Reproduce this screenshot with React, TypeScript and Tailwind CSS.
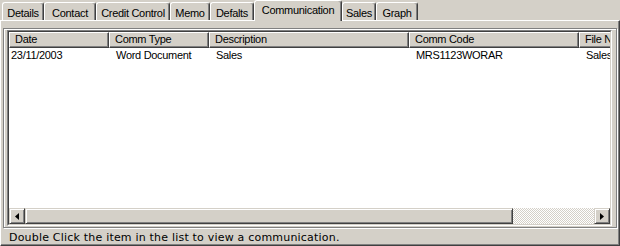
import React from 'react';

const tabs = [
  { label: 'Details', w: 'w-[42px]' },
  { label: 'Contact', w: 'w-[52px]' },
  { label: 'Credit Control', w: 'w-[74px]' },
  { label: 'Memo', w: 'w-[40px]' },
  { label: 'Defalts', w: 'w-[44px]' },
  { label: 'Communication', w: 'w-[88px]', active: true },
  { label: 'Sales', w: 'w-[34px]' },
  { label: 'Graph', w: 'w-[42px]' },
];

const columns = [
  { label: 'Date', w: 'w-[100px]' },
  { label: 'Comm Type', w: 'w-[100px]' },
  { label: 'Description', w: 'w-[200px]' },
  { label: 'Comm Code', w: 'w-[170px]' },
  { label: 'File Name', w: 'w-[140px]' },
];

const rows = [['23/11/2003', 'Word Document', 'Sales', 'MRS1123WORAR', 'Sales\\MRS1123WORAR.doc']];

const ArrowBtn: React.FC<{ dir: 'left' | 'right' }> = ({ dir }) => (
  <div className="w-[16px] h-[16px] shrink-0 bg-[#d4d0c8] border-t border-l border-b border-r border-t-[#d4d0c8] border-l-[#d4d0c8] border-b-[#404040] border-r-[#404040] shadow-[inset_1px_1px_0_#fff,inset_-1px_-1px_0_#808080] flex items-center justify-center">
    <svg width="4" height="7" viewBox="0 0 4 7">
      {dir === 'left' ? <path d="M0 3.5 L4 0 L4 7 Z" fill="#000" /> : <path d="M4 3.5 L0 0 L0 7 Z" fill="#000" />}
    </svg>
  </div>
);

export default function App() {
  return (
    <div className="w-[620px] h-[246px] bg-[#d4d0c8] overflow-hidden flex flex-col font-['Liberation_Sans',Arial,sans-serif] text-[11px] text-black">
      {/* Tab strip */}
      <div className="h-[20px] flex items-end pl-[2px] shrink-0">
        {tabs.map((t) =>
          t.active ? (
            <div
              key={t.label}
              className={`${t.w} h-[21px] -mb-[1px] relative z-10 bg-[#d4d0c8] border-t border-l border-r border-t-white border-l-white border-r-[#404040] rounded-t-[3px] shadow-[inset_-1px_0_0_#808080] flex justify-center pt-[2px] leading-[14px] tracking-[-0.3px]`}
            >
              {t.label}
            </div>
          ) : (
            <div
              key={t.label}
              className={`${t.w} h-[18px] border-t border-l border-r border-t-white border-l-white border-r-[#404040] rounded-t-[3px] shadow-[inset_-1px_0_0_#808080] flex justify-center pt-[3px] leading-[14px] tracking-[-0.3px]`}
            >
              {t.label}
            </div>
          )
        )}
      </div>

      {/* Tab panel */}
      <div className="flex-1 flex flex-col border-t border-l border-r border-b border-t-white border-l-white border-r-[#404040] border-b-[#404040] shadow-[inset_-1px_-1px_0_#808080] pt-[7px] pl-[2px] pr-[1px]">
        {/* etched frame */}
        <div className="w-[614px] border border-[#808080] shadow-[1px_1px_0_#fff,inset_1px_1px_0_#fff] pt-[1px] pl-[3px] pr-[4px] pb-[1px]">
          {/* list view, sunken */}
          <div className="h-[196px] border-t border-l border-b border-r border-t-[#808080] border-l-[#808080] border-b-white border-r-white">
            <div className="h-full flex flex-col bg-white border-t border-l border-b border-r border-t-[#404040] border-l-[#404040] border-b-[#d4d0c8] border-r-[#d4d0c8] overflow-hidden">
              {/* header */}
              <div className="h-[16px] flex shrink-0 overflow-hidden tracking-[-0.3px]">
                {columns.map((c) => (
                  <div
                    key={c.label}
                    className={`${c.w} shrink-0 h-[16px] bg-[#d4d0c8] border-t border-l border-b border-r border-t-white border-l-white border-b-[#404040] border-r-[#404040] shadow-[inset_-1px_-1px_0_#808080] pl-[5px] leading-[13px] whitespace-nowrap overflow-hidden`}
                  >
                    {c.label}
                  </div>
                ))}
              </div>
              {/* rows */}
              <div className="flex-1 overflow-hidden">
                {rows.map((r, i) => (
                  <div key={i} className="h-[14px] flex leading-[14px] tracking-[-0.3px] whitespace-nowrap">
                    {r.map((cell, j) => (
                      <div key={j} className={`${columns[j].w} shrink-0 overflow-hidden ${j === 0 ? 'pl-[2px]' : 'pl-[7px]'}`}>
                        {cell}
                      </div>
                    ))}
                  </div>
                ))}
              </div>
              {/* horizontal scrollbar */}
              <div className="h-[16px] flex shrink-0">
                <ArrowBtn dir="left" />
                <div className="flex-1 flex bg-[repeating-conic-gradient(#d4d0c8_0%_25%,#ffffff_0%_50%)] bg-[length:2px_2px]">
                  <div className="w-[488px] h-[16px] bg-[#d4d0c8] border-t border-l border-b border-r border-t-[#d4d0c8] border-l-[#d4d0c8] border-b-[#404040] border-r-[#404040] shadow-[inset_1px_1px_0_#fff,inset_-1px_-1px_0_#808080]" />
                </div>
                <ArrowBtn dir="right" />
              </div>
            </div>
          </div>
        </div>
        {/* status */}
        <div className="pl-[6px] pt-[3px] font-['DejaVu_Sans',sans-serif] text-[11px] leading-[13px] tracking-[0.2px] whitespace-nowrap">
          Double Click the item in the list to view a communication.
        </div>
      </div>
    </div>
  );
}
